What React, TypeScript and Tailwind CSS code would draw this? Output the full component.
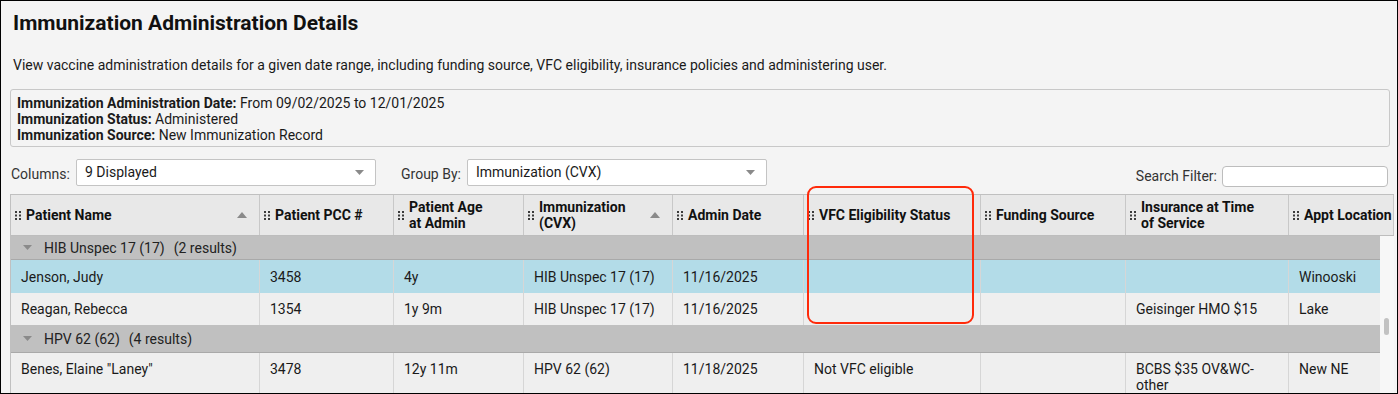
import React from "react";

// Column widths in px, left to right. The last header cell runs over the scrollbar track.
const COLS = [249, 134, 130, 149, 131, 177, 145, 163];

type Row = { cells: string[]; h: number; selected?: boolean; top?: boolean };
type Group = { label: string; count: string; h: number; rows: Row[] };

const groups: Group[] = [
  {
    label: "HIB Unspec 17 (17)",
    count: "(2 results)",
    h: 24,
    rows: [
      {
        cells: ["Jenson, Judy", "3458", "4y", "HIB Unspec 17 (17)", "11/16/2025", "", "", "", "Winooski"],
        h: 33,
        selected: true,
      },
      {
        cells: ["Reagan, Rebecca", "1354", "1y 9m", "HIB Unspec 17 (17)", "11/16/2025", "", "", "Geisinger HMO $15", "Lake"],
        h: 32,
      },
    ],
  },
  {
    label: "HPV 62 (62)",
    count: "(4 results)",
    h: 28,
    rows: [
      {
        cells: ["Benes, Elaine \"Laney\"", "3478", "12y 11m", "HPV 62 (62)", "11/18/2025", "Not VFC eligible", "", "BCBS $35 OV&WC-other", "New NE"],
        h: 48,
        top: true,
      },
    ],
  },
];

const headers: { label: React.ReactNode; sort?: boolean }[] = [
  { label: "Patient Name", sort: true },
  { label: "Patient PCC #" },
  { label: <>Patient Age<br />at Admin</> },
  { label: <>Immunization<br />(CVX)</>, sort: true },
  { label: "Admin Date" },
  { label: "VFC Eligibility Status" },
  { label: "Funding Source" },
  { label: <>Insurance at Time<br />of Service</> },
  { label: "Appt Location" },
];

function Grip() {
  return (
    <svg width="6" height="9" viewBox="0 0 6 9" className="shrink-0">
      {[0, 3.5, 7].map((y) =>
        [0, 4].map((x) => <rect key={`${x}-${y}`} x={x} y={y} width="2" height="2" fill="#3a3a3a" />),
      )}
    </svg>
  );
}

function Caret({ className }: { className?: string }) {
  return (
    <svg width="9" height="5" viewBox="0 0 9 5" className={className}>
      <path d="M0 0h9L4.5 5z" fill="#8a8a8a" />
    </svg>
  );
}

function SortUp() {
  return (
    <svg width="10" height="6" viewBox="0 0 10 6" className="shrink-0">
      <path d="M0 6h10L5 0z" fill="#8a8a8a" />
    </svg>
  );
}

function Select({ value, width }: { value: string; width: string }) {
  return (
    <div
      className={`flex h-[27px] items-center justify-between rounded-[2px] border border-[#c4c4c4] bg-white pl-[8px] pr-[11px] ${width}`}
    >
      <span className="text-[14px] text-[#1a1a1a]">{value}</span>
      <Caret />
    </div>
  );
}

export default function App() {
  return (
    <div
      className="relative h-[394px] w-[1398px] overflow-hidden border border-black bg-[#f4f4f4] text-[#1a1a1a]"
      style={{ fontFamily: "Roboto, 'Liberation Sans', sans-serif" }}
    >
      <h1 className="pl-[12px] pt-[9px] text-[21px] font-bold leading-[26px] text-[#111]">
        Immunization Administration Details
      </h1>
      <p className="pl-[12px] pt-[21px] text-[14px] leading-[16px]">
        View vaccine administration details for a given date range, including funding source, VFC eligibility,
        insurance policies and administering user.
      </p>

      {/* Applied filters */}
      <div className="ml-[9px] mt-[16px] h-[58px] w-[1380px] rounded-[3px] border border-[#c8c8c8] px-[6px] pt-[5px] text-[14px] leading-[16px]">
        <div>
          <b>Immunization Administration Date:</b> From 09/02/2025 to 12/01/2025
        </div>
        <div>
          <b>Immunization Status:</b> Administered
        </div>
        <div>
          <b>Immunization Source:</b> New Immunization Record
        </div>
      </div>

      {/* Controls */}
      <div className="mt-[12px] flex items-start pl-[10px] pr-[9px] text-[14px]">
        <span className="mt-[5px] w-[65px] text-[#333]">Columns:</span>
        <Select value="9 Displayed" width="w-[300px]" />
        <span className="ml-[25px] mt-[5px] w-[66px] text-[#333]">Group By:</span>
        <Select value="Immunization (CVX)" width="w-[300px]" />
        <div className="ml-auto mt-[7px] flex items-center">
          <span className="mr-[5px] text-[#333]">Search Filter:</span>
          <div className="h-[21px] w-[166px] rounded-[4px] border border-[#bdbdbd] bg-white" />
        </div>
      </div>

      {/* Grid */}
      <div className="ml-[9px] mt-[7px] w-[1384px] border-l border-t border-[#c0c0c0]">
        <div className="flex h-[41px] border-b border-[#bdbdbd] bg-[#e8e8e8] text-[14px] font-bold leading-[16px]">
          {headers.map((h, i) => (
            <div
              key={i}
              className={`flex items-center gap-[5px] overflow-hidden whitespace-nowrap border-r border-[#c8c8c8] pl-[4px] pr-[12px] ${i === 8 ? "flex-1" : "shrink-0"}`}
              style={i < 8 ? { width: COLS[i] } : undefined}
            >
              <Grip />
              <span className="flex-1 text-[#111]">{h.label}</span>
              {h.sort && <SortUp />}
            </div>
          ))}
        </div>

        <div className="flex">
          <div className="w-[1369px] text-[14px] leading-[16px]">
            {groups.map((g) => (
              <div key={g.label}>
                <div
                  className="flex items-center border-b border-[#a9a9a9] bg-[#c0c0c0] pl-[12px] text-[#222]"
                  style={{ height: g.h }}
                >
                  <Caret className="mr-[12px]" />
                  <span>{g.label}</span>
                  <span className="ml-[9px]">{g.count}</span>
                </div>
                {g.rows.map((r, ri) => (
                  <div
                    key={ri}
                    className={`flex ${r.selected ? "bg-[#b3dce8]" : "bg-[#efefef]"}`}
                    style={{ height: r.h }}
                  >
                    {r.cells.map((c, ci) => (
                      <div
                        key={ci}
                        className={`flex border-r border-[#d6d6d6] px-[10px] ${r.top ? "items-start pt-[8px]" : "items-center"} ${ci === 8 ? "flex-1 border-r-0" : "shrink-0"}`}
                        style={ci < 8 ? { width: COLS[ci] } : undefined}
                      >
                        {c}
                      </div>
                    ))}
                  </div>
                ))}
              </div>
            ))}
          </div>
          {/* Scrollbar track */}
          <div className="flex-1 bg-[#f7f7f7] pt-[82px]">
            <div className="ml-[4px] h-[17px] w-[5px] rounded-full bg-[#c2c2c2]" />
          </div>
        </div>
      </div>

      {/* Annotation around the VFC column */}
      <div className="pointer-events-none absolute left-[806px] top-[185px] h-[138px] w-[167px] rounded-[9px] border-2 border-[#ff2a0a]" />
    </div>
  );
}
